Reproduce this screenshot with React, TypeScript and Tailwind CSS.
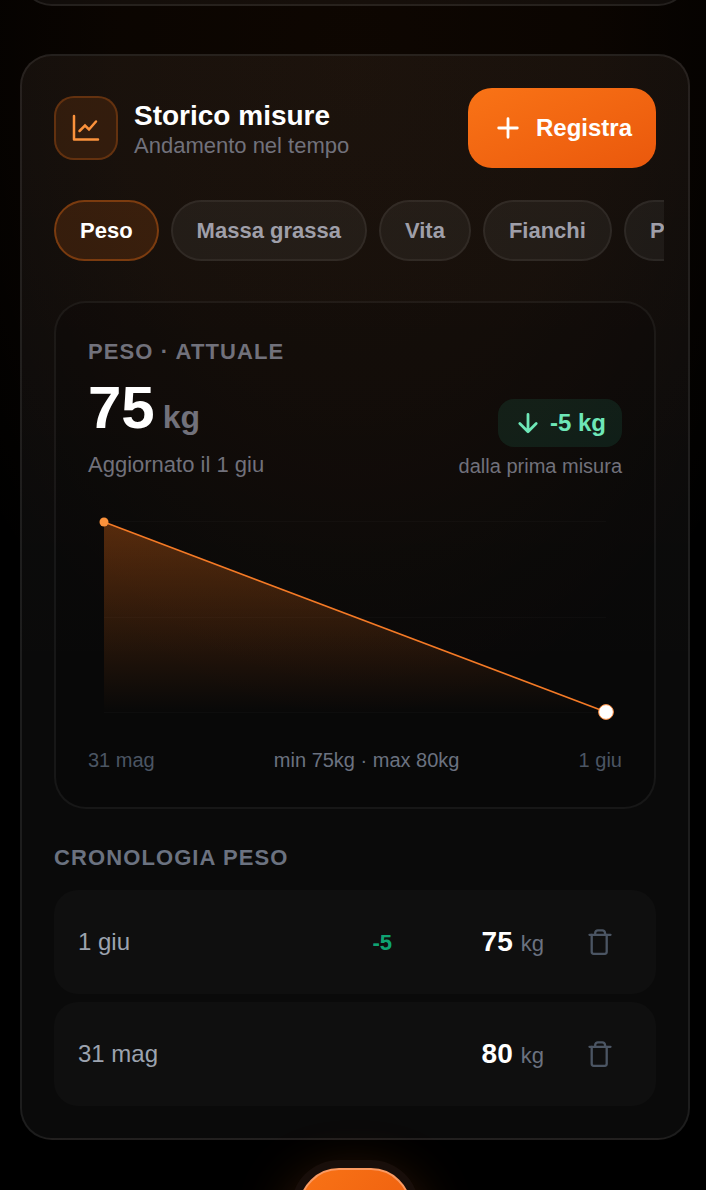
import React, { useState } from "react";

const metrics = ["Peso", "Massa grassa", "Vita", "Fianchi", "Petto"];

const history = [
  { date: "1 giu", delta: "-5", value: 75 },
  { date: "31 mag", delta: "", value: 80 },
];

const ChartIcon: React.FC = () => (
  <svg viewBox="0 0 32 32" className="size-8" fill="none" stroke="currentColor" strokeWidth="2.5" aria-hidden="true">
    <path d="M4 4v23.5h24" strokeLinecap="round" strokeLinejoin="round" />
    <path d="m9.500 19 5.500-5.500 4 4L26 9.500" strokeLinecap="round" strokeLinejoin="miter" />
  </svg>
);

const PlusIcon: React.FC = () => (
  <svg viewBox="0 0 32 32" className="size-8" fill="none" stroke="currentColor" strokeWidth="2.8" strokeLinecap="round" aria-hidden="true">
    <path d="M16 6.7v18.6M6.7 16h18.6" />
  </svg>
);

const ArrowDownIcon: React.FC = () => (
  <svg
    viewBox="0 0 28 28"
    className="size-7"
    fill="none"
    stroke="currentColor"
    strokeWidth="2.8"
    strokeLinecap="round"
    strokeLinejoin="round"
    aria-hidden="true"
  >
    <path d="M14 5.500v17M5.800 14.500l8.200 8.200 8.200-8.200" />
  </svg>
);

const TrashIcon: React.FC = () => (
  <svg
    viewBox="0 0 28 28"
    className="size-7"
    fill="none"
    stroke="currentColor"
    strokeWidth="2.3"
    strokeLinecap="round"
    strokeLinejoin="round"
    aria-hidden="true"
  >
    <path d="M3.500 6.800h21" />
    <path d="M5.700 6.800v17a2 2 0 0 0 2 2h11a2 2 0 0 0 2-2v-17" />
    <path d="M9.200 6.800v-1.800a2.600 2.600 0 0 1 2.600-2.600h4.600A2.600 2.600 0 0 1 19 5v1.800" />
  </svg>
);

const WeightChart: React.FC = () => (
  <svg viewBox="0 0 534 224" className="mt-6 block w-full" role="img" aria-label="Andamento del peso">
    <defs>
      <linearGradient id="area" x1="0" y1="0" x2="0" y2="1">
        <stop offset="0%" stopColor="#f97316" stopOpacity="0.32" />
        <stop offset="100%" stopColor="#f97316" stopOpacity="0" />
      </linearGradient>
    </defs>
    <g stroke="#ffffff" strokeOpacity="0.025" strokeWidth="1">
      <path d="M16 16.5h502M16 112.5h502M16 207.5h502" />
    </g>
    <path d="M16 17 518 207V208H16Z" fill="url(#area)" />
    <path d="M16 17 518 207" stroke="#f47a26" strokeWidth="1.6" fill="none" />
    <circle cx="16" cy="17" r="4.5" fill="#fb923c" />
    <circle cx="518" cy="207" r="7.4" fill="#ffffff" stroke="#f98a3c" strokeWidth="1" />
  </svg>
);

const App: React.FC = () => {
  const [active, setActive] = useState("Peso");

  return (
    <main className="h-screen overflow-hidden bg-black bg-[radial-gradient(ellipse_480px_700px_at_50%_60px,rgba(249,115,22,0.055),rgba(249,115,22,0.045)_50%,transparent)] px-5 pr-4 font-['Liberation_Sans',Arial,sans-serif] text-white">
      {/* PREVIOUS CARD */}
      <section className="-mt-[58px] h-16 rounded-[32px] border-2 border-white/8 bg-white/4"></section>

      {/* HISTORY CARD */}
      <section className="mt-12 rounded-[32px] border-2 border-white/8 bg-[linear-gradient(to_bottom,rgba(249,150,80,0.025),transparent_60%)] p-8 bg-white/4">
        <div className="flex items-center gap-4">
          <div className="flex size-16 shrink-0 items-center justify-center rounded-[20px] border-2 border-[#f97316]/25 bg-[#f97316]/12 text-[#fb923c]">
            <ChartIcon />
          </div>
          <div className="min-w-0 flex-1">
            <h2 className="text-[28px] leading-[35px] font-bold">Storico misure</h2>
            <p className="text-[22px] leading-[25px] text-zinc-500">Andamento nel tempo</p>
          </div>
          <button
            type="button"
            className="flex h-20 items-center gap-3 rounded-3xl bg-linear-to-br from-[#f97316] to-[#ea580c] px-6 text-2xl font-bold"
          >
            <PlusIcon />
            Registra
          </button>
        </div>

        <div className="mt-8 -mr-2 flex gap-3 overflow-hidden">
          {metrics.map((metric) => (
            <button
              key={metric}
              type="button"
              aria-pressed={metric === active}
              onClick={() => setActive(metric)}
              className={`shrink-0 rounded-full border-2 px-6 py-3 text-[22px] leading-[33px] font-bold ${
                metric === active
                  ? "border-[#f97316]/35 bg-[#f97316]/15 text-white"
                  : "border-white/6 bg-white/5 text-zinc-400"
              }`}
            >
              {metric}
            </button>
          ))}
        </div>

        {/* CURRENT VALUE */}
        <div className="mt-10 rounded-[32px] border-2 border-white/6 bg-black/15 p-8">
          <div className="flex items-end justify-between">
            <div>
              <h3 className="text-[22px] leading-[33px] font-bold tracking-wider text-zinc-500 uppercase">
                Peso · attuale
              </h3>
              <p className="mt-2 flex items-baseline gap-2 text-6xl leading-16 font-bold">
                75
                <span className="text-[32px] leading-none text-zinc-500">kg</span>
              </p>
              <p className="mt-2 text-[22px] leading-[33px] text-zinc-500">Aggiornato il 1 giu</p>
            </div>
            <div className="flex flex-col items-end">
              <span className="flex h-12 items-center gap-2 rounded-2xl bg-[#34d399]/10 px-4 text-2xl font-bold text-[#6ee7b7]">
                <ArrowDownIcon />
                -5 kg
              </span>
              <p className="mt-1 text-xl leading-[30px] text-zinc-500">dalla prima misura</p>
            </div>
          </div>

          <WeightChart />

          <div className="mt-4 flex justify-between text-xl leading-[30px] text-[#4b5563]">
            <span>31 mag</span>
            <span className="text-[#6b7280]">min 75kg · max 80kg</span>
            <span>1 giu</span>
          </div>
        </div>

        {/* HISTORY LIST */}
        <h3 className="mt-8 text-[22px] leading-[33px] font-bold tracking-wider text-[#6b7280] uppercase">
          Cronologia peso
        </h3>
        <ul className="mt-4 space-y-2">
          {history.map((row) => (
            <li key={row.date} className="flex items-center gap-6 rounded-3xl bg-white/[0.025] p-6">
              <span className="flex-1 text-2xl text-[#9ca3af]">{row.date}</span>
              <span className="text-[22px] font-bold text-[#10b981]/90">{row.delta}</span>
              <span className="flex w-32 items-baseline justify-end gap-2 text-[28px] font-bold">
                {row.value}
                <span className="text-[22px] font-normal text-[#6b7280]">kg</span>
              </span>
              <button
                type="button"
                aria-label={`Elimina misura del ${row.date}`}
                className="flex h-14 w-16 items-center justify-center text-[#4b5563]"
              >
                <TrashIcon />
              </button>
            </li>
          ))}
        </ul>
      </section>

      {/* BOTTOM ACTION */}
      <nav className="mt-7 flex justify-center">
        <button
          type="button"
          aria-label="Aggiungi"
          className="size-28 rounded-[40px] border-2 border-[#fb9a62] bg-linear-to-br from-[#f97316] to-[#ea580c] shadow-[0_0_0_8px_#180e0a,0_16px_60px_rgba(249,115,22,0.35)]"
        ></button>
      </nav>
    </main>
  );
};

export default App;
